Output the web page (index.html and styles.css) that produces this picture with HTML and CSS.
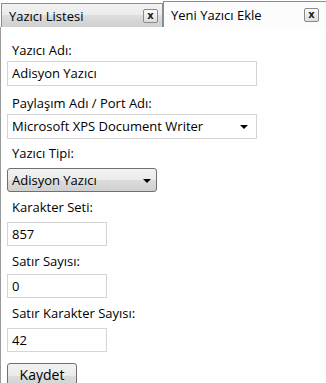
FILE: index.html
```html
<!DOCTYPE html>
<html lang="tr">
<head>
<meta charset="utf-8">
<title>Yazıcı</title>
<link rel="stylesheet" href="styles.css">
</head>
<body>
<div class="window">
  <div class="tabs">
    <div class="tab">
      <span class="tab-title">Yazıcı Listesi</span>
      <span class="close">x</span>
    </div>
    <div class="tab tab-active">
      <span class="tab-title">Yeni Yazıcı Ekle</span>
      <span class="close">x</span>
    </div>
  </div>
  <div class="panel">
    <label class="label l1">Yazıcı Adı:</label>
    <div class="field wide">Adisyon Yazıcı</div>
    <label class="label l2">Paylaşım Adı / Port Adı:</label>
    <div class="field wide select">
      <span>Microsoft XPS Document Writer</span>
      <span class="arrow"></span>
    </div>
    <label class="label l3">Yazıcı Tipi:</label>
    <div class="combo">
      <span>Adisyon Yazıcı</span>
      <span class="arrow"></span>
    </div>
    <label class="label l4">Karakter Seti:</label>
    <div class="field short">857</div>
    <label class="label l5">Satır Sayısı:</label>
    <div class="field short">0</div>
    <label class="label l6">Satır Karakter Sayısı:</label>
    <div class="field short">42</div>
    <div class="button">Kaydet</div>
  </div>
</div>
</body>
</html>
```
FILE: styles.css
```css
html, body {
  margin: 0;
  padding: 0;
  background: #ffffff;
}
body {
  font-family: "Open Sans", "Noto Sans", sans-serif;
  font-size: 13px;
  color: #000;
  width: 326px;
  height: 383px;
  overflow: hidden;
}
.window {
  display: flex;
  flex-direction: column;
}
.tabs {
  display: flex;
  align-items: flex-end;
  height: 27px;
  flex-shrink: 0;
  padding-left: 1px;
}
.tab {
  box-sizing: border-box;
  display: flex;
  align-items: center;
  justify-content: space-between;
  width: 162px;
  height: 24px;
  padding: 0 4px 0 7px;
  border: 1px solid #898c95;
  border-bottom: none;
  background: linear-gradient(#f2f2f2 0%, #ebebeb 50%, #dddddd 50%, #cfcfcf 100%);
}
.tab-active {
  height: 26px;
  flex: 1;
  margin-right: -2px;
  padding-right: 8px;
  background: #fcfcfc;
  border-color: #898c95;
}
.tab-title {
  line-height: 17px;
  padding-top: 1px;
}
.close {
  box-sizing: border-box;
  width: 15px;
  height: 14px;
  border: 1px solid #8a8a8a;
  border-radius: 2px;
  background: linear-gradient(#fafafa, #dedede);
  font-family: "DejaVu Sans", sans-serif;
  font-weight: bold;
  font-size: 10px;
  line-height: 11px;
  text-align: center;
  color: #1a1a1a;
}
.panel {
  display: flex;
  flex-direction: column;
  align-items: flex-start;
  border-left: 1px solid #9a9a9a;
  padding-left: 6px;
  padding-bottom: 10px;
}
.panel > * {
  flex-shrink: 0;
}
.label {
  display: block;
  line-height: 17px;
  padding-left: 5px;
  margin-top: 7px;
  margin-bottom: 6px;
}
.l1 { margin-top: 15px; margin-bottom: 2px; }
.l2 { margin-top: 9px; margin-bottom: 2px; }
.l3 { margin-top: 6px; }
.l5 { margin-bottom: 4px; }
.field {
  box-sizing: border-box;
  height: 25px;
  border: 1px solid #d5d5d5;
  padding: 0 4px;
  line-height: 23px;
  background: #fff;
}
.wide { width: 250px; }
.short { width: 100px; height: 24px; line-height: 22px; }
.select {
  display: flex;
  align-items: center;
  justify-content: space-between;
  padding-right: 8px;
}
.arrow {
  width: 0;
  height: 0;
  border-left: 4px solid transparent;
  border-right: 4px solid transparent;
  border-top: 4px solid #000;
  margin-top: 1px;
}
.combo {
  box-sizing: border-box;
  display: flex;
  align-items: center;
  justify-content: space-between;
  width: 150px;
  height: 24px;
  padding: 0 5px 0 4px;
  border: 1px solid #707070;
  border-radius: 3px;
  background: linear-gradient(#f2f2f2 0%, #ebebeb 50%, #dddddd 50%, #cfcfcf 100%);
}
.button {
  box-sizing: border-box;
  width: 70px;
  height: 26px;
  margin-top: 11px;
  border: 1px solid #707070;
  border-radius: 3px;
  background: linear-gradient(#f2f2f2 0%, #ebebeb 50%, #dddddd 50%, #cfcfcf 100%);
  text-align: center;
  line-height: 22px;
  font-size: 14px;
}
```
